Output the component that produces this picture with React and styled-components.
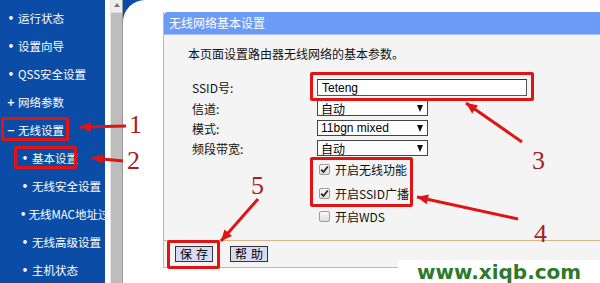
import React from 'react'
import styled, { createGlobalStyle } from 'styled-components'

const GlobalStyle = createGlobalStyle`
    html, body {
        margin: 0;
        padding: 0;
        background: #fff;
    }
    body {
        width: 600px;
        height: 283px;
        overflow: hidden;
        font-family: "Noto Sans CJK SC", "DejaVu Sans", sans-serif;
    }
`

const Page = styled.div`
    position: relative;
    display: flex;
    width: 600px;
    height: 283px;
    overflow: hidden;
    background: #fff;
`

const Sidebar = styled.ul`
    width: 105px;
    margin: 0;
    padding: 4px 0 0 0;
    list-style: none;
    background: #0b4ca6;
    flex-shrink: 0;
`

const MenuItem = styled.li`
    display: flex;
    align-items: center;
    height: 28px;
    padding-left: ${props => props.$sub ? "20px" : "6px"};
    color: ${props => props.$active ? "#e8ffd8" : "#fff"};
    font-size: 11.5px;
    white-space: nowrap;
`

const Mark = styled.span`
    width: 10px;
    margin-right: 2px;
    text-align: center;
    font-size: 10px;
    font-weight: bold;
    font-family: "DejaVu Sans", sans-serif;
`

const Gap = styled.div`
    width: 5px;
    flex-shrink: 0;
`

const Scrollbar = styled.div`
    width: 13px;
    flex-shrink: 0;
    display: flex;
    flex-direction: column;
    border-left: 1px solid #e4e4e4;
    border-right: 1px solid #9a9a9a;
    box-sizing: border-box;
`

const ScrollUp = styled.div`
    height: 12px;
    background: #eeeeee;
    display: flex;
    justify-content: center;
    padding-top: 3px;
    box-sizing: border-box;
    &::after {
        content: "";
        border-left: 3px solid transparent;
        border-right: 3px solid transparent;
        border-bottom: 4px solid #777;
        height: 0;
    }
`

const ScrollTrack = styled.div`
    flex: 1;
    background: #bdbdbd;
    border-top: 1px solid #dcdcdc;
`

const ContentCorner = styled.div`
    flex: 1;
    background: #0b4ca6;
`

const Content = styled.div`
    height: 100%;
    background: #fff;
    border-top-left-radius: 22px;
    padding: 12px 0 0 40px;
    box-sizing: border-box;
`

const Panel = styled.div`
    background: #f4f4f4;
    border-left: 1px solid #d8b488;
    border-bottom: 1px solid #d8b488;
`

const PanelHeader = styled.div`
    height: 22px;
    line-height: 22px;
    padding-left: 5px;
    background: #6a9bf6;
    border-top-left-radius: 4px;
    border-bottom: 1px solid #a9c6fa;
    color: #fff;
    font-size: 12px;
`

const PanelBody = styled.div`
    padding: 11px 0 0 24px;
    height: 205px;
    box-sizing: border-box;
`

const Intro = styled.div`
    font-size: 12px;
    line-height: 16px;
    color: #111;
`

const Form = styled.div`
    margin-top: 15px;
    padding-left: 4px;
`

const Row = styled.div`
    display: flex;
    align-items: center;
    height: ${props => props.$tall ? "21px" : "20px"};
`

const Label = styled.div`
    width: 125px;
    font-size: 12px;
    color: #111;
`

const TextBox = styled.input`
    width: 210px;
    height: 17px;
    box-sizing: border-box;
    border: 1px solid #555;
    border-top-color: #333;
    padding: 0 4px;
    font-family: "Liberation Sans", sans-serif;
    font-size: 12px;
    color: #000;
    background: #fff;
    outline: none;
`

const SelectBox = styled.div`
    width: 111px;
    height: 16px;
    box-sizing: border-box;
    border: 1px solid #444;
    background: #fff;
    display: flex;
    align-items: center;
    justify-content: space-between;
    padding: 0 4px 0 3px;
    font-size: 12px;
    font-family: "Liberation Sans", "Noto Sans CJK SC", sans-serif;
    color: #000;
    &::after {
        content: "";
        border-left: 3.5px solid transparent;
        border-right: 3.5px solid transparent;
        border-top: 7px solid #111;
    }
`

const Checks = styled.div`
    margin-top: 0;
    padding-left: 125px;
`

const CheckRow = styled.div`
    display: flex;
    align-items: center;
    height: 23.5px;
    font-size: 12px;
    color: #111;
`

const Box = styled.span`
    width: 11px;
    height: 11px;
    margin: 0 5px 0 2px;
    box-sizing: border-box;
    border: 1px solid #9c9c9c;
    border-radius: 2px;
    background: linear-gradient(#f8f8f8, #dedede);
    display: flex;
    align-items: center;
    justify-content: center;
`

const Footer = styled.div`
    height: 27px;
    border-top: 1px solid #d8b488;
    box-sizing: border-box;
    display: flex;
    align-items: center;
    gap: 17px;
    padding-left: 11px;
`

const Button = styled.button`
    width: 38px;
    height: 16px;
    padding: 0;
    border: 1px solid #333;
    background: #d6daf6;
    font-family: "Noto Sans CJK SC", sans-serif;
    font-size: 12px;
    line-height: 14px;
    letter-spacing: 4px;
    text-indent: 4px;
    color: #000;
`

const RedBox = styled.div`
    position: absolute;
    left: ${props => props.$x}px;
    top: ${props => props.$y}px;
    width: ${props => props.$w}px;
    height: ${props => props.$h}px;
    box-sizing: border-box;
    border: 3px solid #e01414;
    border-radius: 2px;
    pointer-events: none;
`

const Num = styled.div`
    position: absolute;
    left: ${props => props.$x}px;
    top: ${props => props.$y}px;
    font-family: "Liberation Serif", serif;
    font-size: 26px;
    line-height: 26px;
    color: #a8201e;
`

const Arrows = styled.svg`
    position: absolute;
    left: 0;
    top: 0;
    pointer-events: none;
`

const Watermark = styled.div`
    position: absolute;
    left: 398px;
    top: 260px;
    width: 202px;
    height: 23px;
    background: #fff;
    display: flex;
    align-items: center;
    padding-left: 19px;
    box-sizing: border-box;
    font-family: "DejaVu Sans", sans-serif;
    font-weight: bold;
    font-size: 20px;
    color: #2e7a2c;
`

const menu = [
    { text: "运行状态", mark: "•" },
    { text: "设置向导", mark: "•" },
    { text: "QSS安全设置", mark: "•" },
    { text: "网络参数", mark: "+" },
    { text: "无线设置", mark: "−" },
    { text: "基本设置", mark: "•", sub: true, active: true },
    { text: "无线安全设置", mark: "•", sub: true },
    { text: "无线MAC地址过滤", mark: "•", sub: true },
    { text: "无线高级设置", mark: "•", sub: true },
    { text: "主机状态", mark: "•", sub: true },
]

const arrows = [
    [126, 126, 80, 127],
    [123, 161, 92, 158],
    [522, 142, 466, 103],
    [518, 219, 417, 197],
    [258, 199, 221, 241],
]

const headPoints = ([x1, y1, x2, y2]) => {
    const a = Math.atan2(y2 - y1, x2 - x1)
    const len = 11
    const half = 5
    const bx = x2 - Math.cos(a) * len
    const by = y2 - Math.sin(a) * len
    const px = -Math.sin(a) * half
    const py = Math.cos(a) * half
    return `${x2},${y2} ${bx + px},${by + py} ${bx - px},${by - py}`
}

const Tick = () => (
    <svg width="9" height="9" viewBox="0 0 9 9">
        <path d="M1.2 4.6 L3.5 7 L7.8 1.5" fill="none" stroke="#222" strokeWidth="1.8" />
    </svg>
)

const App = () => {
    return (
        <Page>
            <GlobalStyle />
            <Sidebar>
                {menu.map(item => (
                    <MenuItem key={item.text} $sub={item.sub} $active={item.active}>
                        <Mark>{item.mark}</Mark>
                        {item.text}
                    </MenuItem>
                ))}
            </Sidebar>
            <Gap />
            <Scrollbar>
                <ScrollUp />
                <ScrollTrack />
            </Scrollbar>
            <ContentCorner>
                <Content>
                    <Panel>
                        <PanelHeader>无线网络基本设置</PanelHeader>
                        <PanelBody>
                            <Intro>本页面设置路由器无线网络的基本参数。</Intro>
                            <Form>
                                <Row $tall>
                                    <Label>SSID号:</Label>
                                    <TextBox defaultValue="Teteng" readOnly />
                                </Row>
                                <Row>
                                    <Label>信道:</Label>
                                    <SelectBox>自动</SelectBox>
                                </Row>
                                <Row>
                                    <Label>模式:</Label>
                                    <SelectBox>11bgn mixed</SelectBox>
                                </Row>
                                <Row>
                                    <Label>频段带宽:</Label>
                                    <SelectBox>自动</SelectBox>
                                </Row>
                                <Checks>
                                    <CheckRow><Box><Tick /></Box>开启无线功能</CheckRow>
                                    <CheckRow><Box><Tick /></Box>开启SSID广播</CheckRow>
                                    <CheckRow><Box />开启WDS</CheckRow>
                                </Checks>
                            </Form>
                        </PanelBody>
                        <Footer>
                            <Button>保存</Button>
                            <Button>帮助</Button>
                        </Footer>
                    </Panel>
                </Content>
            </ContentCorner>

            <RedBox $x={1} $y={117} $w={68} $h={24} />
            <RedBox $x={14} $y={146} $w={63} $h={23} />
            <RedBox $x={310} $y={72} $w={224} $h={29} />
            <RedBox $x={310} $y={157} $w={103} $h={50} />
            <RedBox $x={167} $y={240} $w={53} $h={29} />

            <Arrows width="600" height="283" viewBox="0 0 600 283">
                {arrows.map((a, i) => (
                    <g key={i}>
                        <line x1={a[0]} y1={a[1]} x2={a[2]} y2={a[3]} stroke="#e01414" strokeWidth="3" />
                        <polygon points={headPoints(a)} fill="#e01414" />
                    </g>
                ))}
            </Arrows>

            <Num $x={129} $y={112}>1</Num>
            <Num $x={127} $y={148}>2</Num>
            <Num $x={532} $y={148}>3</Num>
            <Num $x={534} $y={221}>4</Num>
            <Num $x={251} $y={173}>5</Num>

            <Watermark>www.xiqb.com</Watermark>
        </Page>
    )
}

export default App
